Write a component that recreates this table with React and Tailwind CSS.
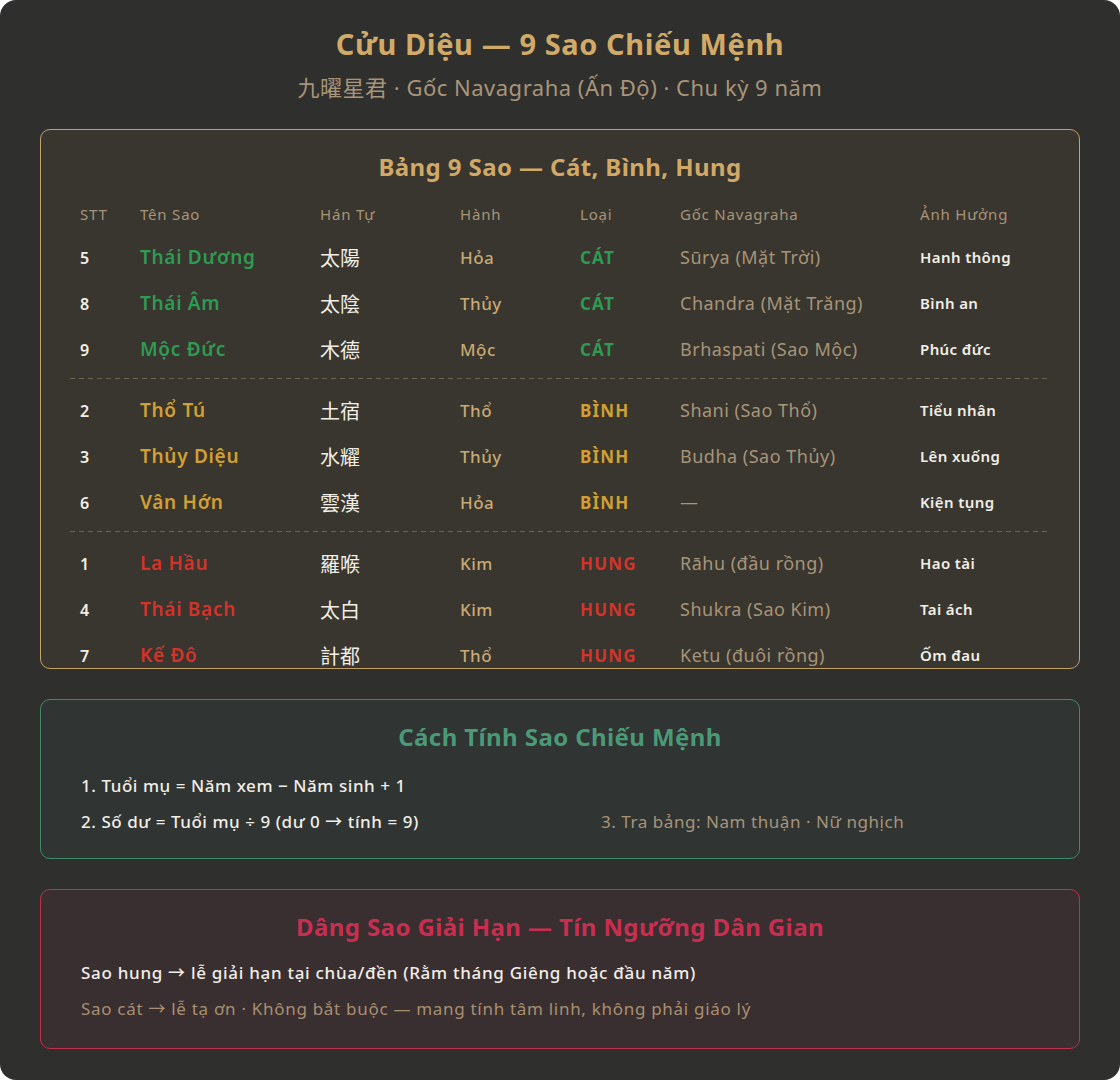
import React from 'react';

const stars = [
    [
        { no: 5, name: 'Thái Dương', han: '太陽', element: 'Hỏa', kind: 'CÁT', origin: 'Sūrya (Mặt Trời)', effect: 'Hanh thông' },
        { no: 8, name: 'Thái Âm', han: '太陰', element: 'Thủy', kind: 'CÁT', origin: 'Chandra (Mặt Trăng)', effect: 'Bình an' },
        { no: 9, name: 'Mộc Đức', han: '木德', element: 'Mộc', kind: 'CÁT', origin: 'Brhaspati (Sao Mộc)', effect: 'Phúc đức' },
    ],
    [
        { no: 2, name: 'Thổ Tú', han: '土宿', element: 'Thổ', kind: 'BÌNH', origin: 'Shani (Sao Thổ)', effect: 'Tiểu nhân' },
        { no: 3, name: 'Thủy Diệu', han: '水耀', element: 'Thủy', kind: 'BÌNH', origin: 'Budha (Sao Thủy)', effect: 'Lên xuống' },
        { no: 6, name: 'Vân Hớn', han: '雲漢', element: 'Hỏa', kind: 'BÌNH', origin: '—', effect: 'Kiện tụng' },
    ],
    [
        { no: 1, name: 'La Hầu', han: '羅喉', element: 'Kim', kind: 'HUNG', origin: 'Rāhu (đầu rồng)', effect: 'Hao tài' },
        { no: 4, name: 'Thái Bạch', han: '太白', element: 'Kim', kind: 'HUNG', origin: 'Shukra (Sao Kim)', effect: 'Tai ách' },
        { no: 7, name: 'Kế Đô', han: '計都', element: 'Thổ', kind: 'HUNG', origin: 'Ketu (đuôi rồng)', effect: 'Ốm đau' },
    ],
];

const kindColors = {
    'CÁT': 'text-[#2f9a52]',
    'BÌNH': 'text-[#d2a032]',
    'HUNG': 'text-[#d3332a]',
};

const cols = 'grid grid-cols-[60px_180px_140px_120px_100px_240px_140px]';

const StarRow = ({ star }) => (
    <div className={`${cols} h-[46px] items-center pt-[3px]`}>
        <div className="px-[10px] text-[16px] font-semibold text-[#f2eee6]">{star.no}</div>
        <div className={`px-[10px] text-[19px] font-semibold tracking-[0.7px] ${kindColors[star.kind]}`}>{star.name}</div>
        <div className="px-[10px] text-[20px] text-[#f2eee6] font-['Noto_Sans_CJK_TC','Noto_Sans_CJK_SC',sans-serif]">{star.han}</div>
        <div className="px-[10px] text-[17px] font-medium tracking-[0.5px] text-[#c9a873]">{star.element}</div>
        <div className={`px-[10px] text-[17px] font-bold tracking-[1.2px] ${kindColors[star.kind]}`}>{star.kind}</div>
        <div className="px-[10px] text-[18px] tracking-[0.5px] text-[#a89478]">{star.origin}</div>
        <div className="px-[10px] text-[15px] font-semibold tracking-[0.4px] text-[#f2eee6]">{star.effect}</div>
    </div>
);

const App = () => {
    return (
        <div className="w-[1120px] h-[1080px] rounded-2xl bg-[#2f2f2d] px-10 pt-[26px] font-['Noto_Sans','Noto_Sans_CJK_TC',sans-serif]">
            <div className="text-center">
                <h1 className="text-[29px] leading-[36px] font-bold tracking-[0.6px] text-[#d1aa68]">Cửu Diệu — 9 Sao Chiếu Mệnh</h1>
                <p className="mt-[11px] text-[22px] leading-[28px] tracking-[0.5px] text-[#a8957a]">九曜星君 · Gốc Navagraha (Ấn Độ) · Chu kỳ 9 năm</p>
            </div>

            <div className="mt-[28px] h-[540px] overflow-hidden rounded-[10px] border border-[#c4a267] bg-[#38362f] px-[29px] pt-[22px]">
                <h2 className="text-center text-[24px] leading-[30px] font-bold tracking-[0.4px] text-[#d1a866]">Bảng 9 Sao — Cát, Bình, Hung</h2>
                <div className={`${cols} mt-[13px] h-[38px] items-center text-[15px] tracking-[0.8px] text-[#a89478]`}>
                    {['STT', 'Tên Sao', 'Hán Tự', 'Hành', 'Loại', 'Gốc Navagraha', 'Ảnh Hưởng'].map(h => (
                        <div key={h} className="px-[10px]">{h}</div>
                    ))}
                </div>
                {stars.map((group, i) => (
                    <div key={i}>
                        {i > 0 && <div className="my-[7px] h-px bg-[repeating-linear-gradient(to_right,#6e6450_0_5px,transparent_5px_9px)]" />}
                        {group.map(star => <StarRow key={star.no} star={star} />)}
                    </div>
                ))}
            </div>

            <div className="mt-[30px] h-[160px] rounded-[10px] border border-[#3c8b69] bg-[#303433] px-10 pt-[22px]">
                <h2 className="text-center text-[24px] leading-[30px] font-bold tracking-[0.4px] text-[#4a9a78]">Cách Tính Sao Chiếu Mệnh</h2>
                <div className="mt-[22px] grid grid-cols-[520px_1fr] gap-y-3 text-[17px] leading-[24px] tracking-[0.55px]">
                    <div className="col-span-2 font-medium text-[#f2eee6]">1. Tuổi mụ = Năm xem − Năm sinh + 1</div>
                    <div className="font-medium text-[#f2eee6]">2. Số dư = Tuổi mụ ÷ 9 (dư 0 → tính = 9)</div>
                    <div className="text-[#a89478]">3. Tra bảng: Nam thuận · Nữ nghịch</div>
                </div>
            </div>

            <div className="mt-[30px] h-[160px] rounded-[10px] border border-[#c0304c] bg-[#3a2f30] px-10 pt-[22px]">
                <h2 className="text-center text-[24px] leading-[30px] font-bold tracking-[0.4px] text-[#c92e50]">Dâng Sao Giải Hạn — Tín Ngưỡng Dân Gian</h2>
                <div className="mt-[19px] space-y-3 text-[17px] leading-[24px] tracking-[0.7px]">
                    <p className="font-medium text-[#f2eee6]">Sao hung → lễ giải hạn tại chùa/đền (Rằm tháng Giêng hoặc đầu năm)</p>
                    <p className="text-[#a89070]">Sao cát → lễ tạ ơn · Không bắt buộc — mang tính tâm linh, không phải giáo lý</p>
                </div>
            </div>
        </div>
    );
};

export default App;
